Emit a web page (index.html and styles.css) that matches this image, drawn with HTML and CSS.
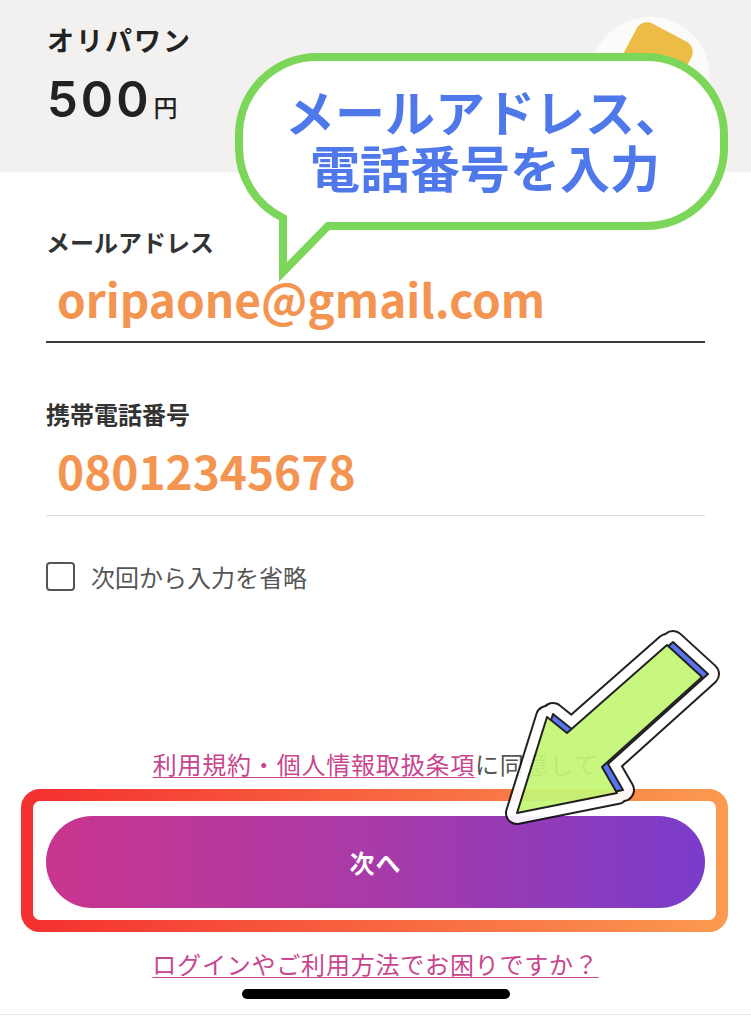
FILE: index.html
```html
<!DOCTYPE html>
<html lang="ja">
<head>
<meta charset="utf-8">
<title>オリパワン</title>
<link rel="stylesheet" href="styles.css">
</head>
<body>
<div class="screen">
  <header class="summary">
    <div class="summary-text">
      <div class="product">オリパワン</div>
      <div class="price"><span class="amount">500</span><span class="yen">円</span></div>
    </div>
    <svg class="thumb" viewBox="0 0 120 120" width="120" height="120">
      <circle cx="60" cy="60" r="60" fill="#fbfbfa"/>
      <rect x="34" y="12" width="62" height="62" rx="12" fill="#ecbc47" transform="rotate(28 65 43)"/>
    </svg>
  </header>

  <main class="fields">
    <div class="label label-mail">メールアドレス</div>
    <div class="value value-mail">oripaone@gmail.com</div>
    <div class="label label-tel">携帯電話番号</div>
    <div class="value value-tel">08012345678</div>
    <label class="remember"><span class="box"></span><span>次回から入力を省略</span></label>
    <p class="terms"><span class="link">利用規約・個人情報取扱条項</span>に同意して</p>
  </main>

  <div class="next">次へ</div>
  <p class="help"><span class="link">ログインやご利用方法でお困りですか？</span></p>
  <div class="indicator"></div>
  <div class="bottom-rule"></div>

  <div class="bubble">
    <svg class="bubble-shape" viewBox="0 0 510 235" width="510" height="235">
      <path d="M 89 9 H 418 A 78 78 0 0 1 496 87 V 100 A 78 78 0 0 1 418 178 H 100 L 55 224 L 55 170 A 78 78 0 0 1 11 100 V 87 A 78 78 0 0 1 89 9 Z" fill="#ffffff" stroke="#7cd65a" stroke-width="8"/>
    </svg>
    <div class="bubble-text"><span class="bubble-line">メールアドレス、</span><span class="bubble-line">電話番号を入力</span></div>
  </div>

  <svg class="frame" viewBox="0 0 707 143" width="707" height="143">
    <defs>
      <linearGradient id="fg" x1="0" y1="0" x2="707" y2="0" gradientUnits="userSpaceOnUse">
        <stop offset="0" stop-color="#f42f30"/>
        <stop offset="1" stop-color="#fb9a50"/>
      </linearGradient>
    </defs>
    <rect x="6" y="6" width="695" height="131" rx="13" fill="none" stroke="url(#fg)" stroke-width="12"/>
  </svg>

  <svg class="arrow" viewBox="0 0 240 220" width="240" height="220">
    <defs>
      <polygon id="ar" points="27,193 57,97 77,113 177,25 212,57 112,147 127,173"/>
    </defs>
    <g stroke-linejoin="round">
      <use href="#ar" fill="#111" stroke="#111" stroke-width="24"/>
      <use href="#ar" transform="translate(6,-3)" fill="#111" stroke="#111" stroke-width="24"/>
      <use href="#ar" fill="#fff" stroke="#fff" stroke-width="20"/>
      <use href="#ar" transform="translate(6,-3)" fill="#fff" stroke="#fff" stroke-width="20"/>
      <use href="#ar" transform="translate(6,-3)" fill="#4b6bf0" stroke="#111" stroke-width="2"/>
      <use href="#ar" fill="#c4f776" stroke="#111" stroke-width="2"/>
    </g>
  </svg>
</div>
</body>
</html>
```

FILE: styles.css
```css
* { box-sizing: border-box; }

body {
  margin: 0;
  background: #ffffff;
  font-family: "Noto Sans CJK JP", "Noto Sans", sans-serif;
  color: #333333;
}

.screen {
  position: relative;
  width: 751px;
  height: 1024px;
  overflow: hidden;
  background: #ffffff;
}

/* header */
.summary {
  height: 172px;
  background: #f3f1f0;
  display: flex;
  justify-content: space-between;
  align-items: flex-start;
  padding: 25px 41px 0 47px;
}

.product {
  font-size: 27px;
  line-height: 30px;
  font-weight: 700;
  letter-spacing: 2px;
  color: #222222;
}

.price {
  margin-top: 20px;
  line-height: 49px;
  color: #222222;
  white-space: nowrap;
}

.amount {
  font-family: Inter, "Liberation Sans", sans-serif;
  font-size: 49px;
  font-weight: 600;
  letter-spacing: 3px;
}

.yen {
  font-size: 24px;
  font-weight: 500;
  margin-left: 2px;
}

.thumb {
  display: block;
  margin-top: -8px;
}

/* form */
.fields {
  padding: 0 46px;
}

.label {
  font-size: 24px;
  line-height: 30px;
  font-weight: 700;
  color: #333333;
}

.label-mail { margin-top: 55px; }
.label-tel { margin-top: 56px; }

.value {
  font-size: 46px;
  line-height: 46px;
  font-weight: 700;
  color: #f39451;
  padding-left: 11px;
}

.value-mail {
  padding-top: 18px;
  padding-bottom: 20px;
  border-bottom: 2px solid #3c3c3c;
}

.value-tel {
  padding-top: 18px;
  padding-bottom: 22px;
  border-bottom: 1px solid #dddddd;
}

.remember {
  margin-top: 46px;
  display: flex;
  align-items: center;
  gap: 16px;
  font-size: 24px;
  line-height: 28px;
  color: #555555;
}

.box {
  width: 29px;
  height: 29px;
  border: 2px solid #555555;
  border-radius: 4px;
  flex: none;
}

.terms {
  margin: 158px 0 0;
  text-align: center;
  font-size: 24px;
  line-height: 30px;
  letter-spacing: 0.8px;
  color: #555555;
  white-space: nowrap;
}

.link {
  color: #c8468e;
  text-decoration: underline;
  text-underline-offset: 3px;
  text-decoration-thickness: 1px;
}

.next {
  margin: 37px 46px 0;
  height: 92px;
  border-radius: 46px;
  background: linear-gradient(90deg, #c9358e 0%, #a83aa8 50%, #7a3cca 100%);
  color: #ffffff;
  font-size: 25px;
  font-weight: 700;
  letter-spacing: 1px;
  display: flex;
  align-items: center;
  justify-content: center;
}

.help {
  margin: 41px 0 0;
  text-align: center;
  font-size: 24px;
  line-height: 30px;
  letter-spacing: 0.8px;
}

.indicator {
  width: 268px;
  height: 10px;
  border-radius: 5px;
  background: #000000;
  margin: 10px auto 0;
}

.bottom-rule {
  margin-top: 15px;
  border-top: 1px solid #e6e6e6;
}

/* annotation overlays */
.bubble {
  position: absolute;
  left: 228px;
  top: 48px;
  width: 510px;
  height: 235px;
  display: grid;
}

.bubble-shape,
.bubble-text {
  grid-area: 1 / 1;
}

.bubble-text {
  display: flex;
  flex-direction: column;
  align-items: center;
  gap: 6px;
  padding: 37px 0 0 4px;
  font-size: 50px;
  line-height: 50px;
  font-weight: 700;
  color: #4f79ea;
  white-space: nowrap;
}

.frame {
  position: absolute;
  left: 21px;
  top: 789px;
}

.arrow {
  position: absolute;
  left: 490px;
  top: 620px;
  opacity: 0.93;
}
```
